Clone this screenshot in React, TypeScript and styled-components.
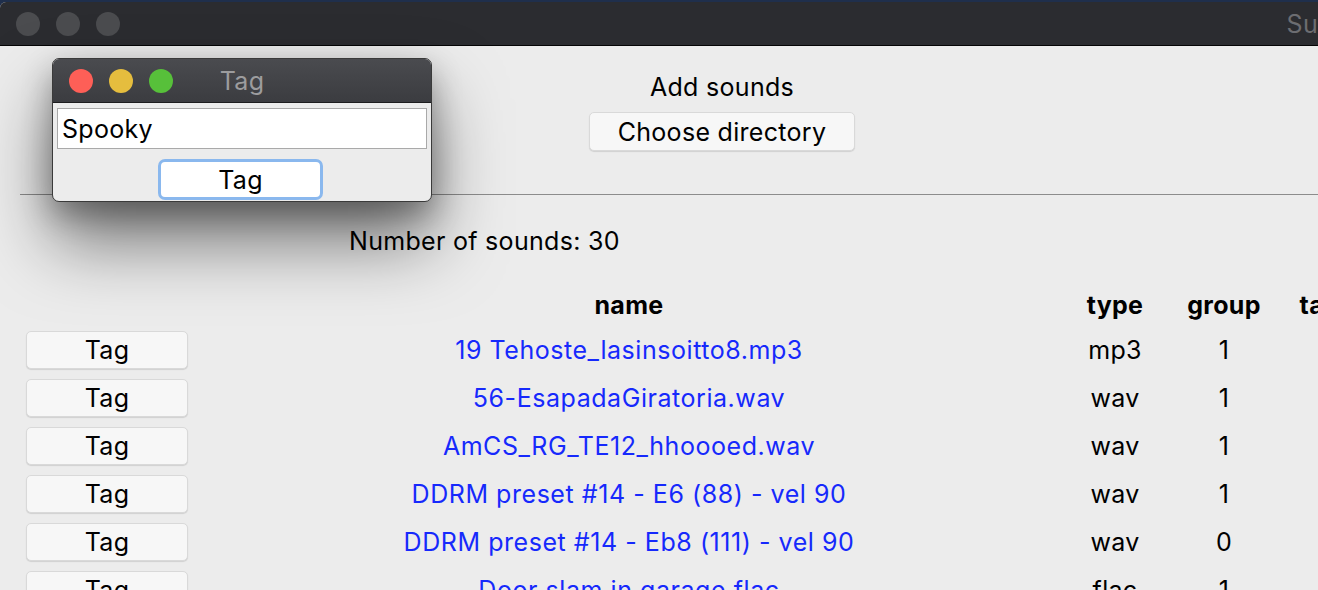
import React from "react";
import styled, { createGlobalStyle } from "styled-components";

const GlobalStyle = createGlobalStyle`
  html, body { margin: 0; padding: 0; height: 100%; overflow: hidden; }
  body {
    background: #1f2f4c;
    font-family: Inter, "Noto Sans", sans-serif;
    letter-spacing: 0.3px;
    -webkit-font-smoothing: antialiased;
  }
`;

const Window = styled.div`
  margin-top: 2px;
  height: 588px;
  display: flex;
  flex-direction: column;
  border-top-left-radius: 6px;
  overflow: hidden;
  position: relative;
  background: #ececec;
`;

const TitleBar = styled.div<{ $popup?: boolean }>`
  flex: none;
  height: 43px;
  display: flex;
  align-items: center;
  padding-left: 16px;
  gap: 16px;
  background: ${(p) => (p.$popup ? "linear-gradient(#4a4b4f, #3b3c40)" : "#2b2c30")};
  border-bottom: 1px solid ${(p) => (p.$popup ? "#1c1c1e" : "#050506")};
  position: relative;
`;

const Light = styled.span<{ $color: string }>`
  width: 24px;
  height: 24px;
  border-radius: 50%;
  background: ${(p) => p.$color};
  flex: none;
`;

const MainTitle = styled.div`
  margin-left: auto;
  white-space: nowrap;
  color: #6c6d71;
  font-size: 25px;
  line-height: 28px;
`;

const PopupTitle = styled.div`
  position: absolute;
  left: 0;
  right: 0;
  text-align: center;
  color: #9c9c9e;
  font-size: 25px;
  line-height: 28px;
  pointer-events: none;
`;

const Content = styled.div`
  flex: 1;
  display: flex;
  flex-direction: column;
  background: #ececec;
`;

const AddSection = styled.div`
  display: flex;
  flex-direction: column;
  align-items: center;
  padding-top: 26px;
  padding-left: 126px;
`;

const Label = styled.div`
  font-size: 25px;
  line-height: 30px;
  color: #000;
`;

const PushButton = styled.button<{ $w: number; $h: number }>`
  width: ${(p) => p.$w}px;
  height: ${(p) => p.$h}px;
  background: #f7f7f7;
  border: 1px solid #d9d9d9;
  border-radius: 5px;
  box-shadow: 0 1px 1px rgba(0, 0, 0, 0.12);
  font-family: inherit;
  letter-spacing: inherit;
  font-size: 25px;
  color: #000;
  padding: 0;
  display: flex;
  align-items: center;
  justify-content: center;
`;

const ChooseButton = styled(PushButton)`
  margin-top: 10px;
`;

const Separator = styled.div`
  margin: 43px 0 0 20px;
  height: 1px;
  background: #8c8c8c;
`;

const Count = styled(Label)`
  margin-top: 31px;
  padding-left: 349px;
`;

const Table = styled.div`
  margin-top: 28px;
  display: grid;
  grid-template-columns: 26px 162px 882px 90px 128px 78px;
  grid-auto-rows: 48px;
  grid-template-rows: 42px;
  align-items: center;
`;

const Cell = styled.div<{ $col: number; $head?: boolean; $link?: boolean }>`
  grid-column: ${(p) => p.$col};
  text-align: center;
  font-size: 25px;
  line-height: 30px;
  font-weight: ${(p) => (p.$head ? 700 : 400)};
  color: ${(p) => (p.$link ? "#1629fc" : "#000")};
  letter-spacing: ${(p) => (p.$link ? "0.55px" : "inherit")};
  white-space: nowrap;
`;

const Popup = styled.div`
  position: absolute;
  left: 52px;
  top: 56px;
  width: 380px;
  height: 144px;
  box-sizing: border-box;
  border: 1px solid #3a3a3a;
  border-radius: 7px;
  overflow: hidden;
  background: #ececec;
  display: flex;
  flex-direction: column;
  box-shadow: 0 40px 70px rgba(0, 0, 0, 0.5), 0 12px 30px rgba(0, 0, 0, 0.3);
`;

const PopupBody = styled.div`
  display: flex;
  flex-direction: column;
  align-items: center;
  padding: 5px 4px 0 4px;
`;

const Input = styled.div`
  align-self: stretch;
  height: 41px;
  box-sizing: border-box;
  background: #fff;
  border: 1px solid #a9a9a9;
  padding-left: 4px;
  display: flex;
  align-items: center;
  font-size: 25px;
  color: #000;
`;

const FocusButton = styled.button`
  margin: 10px 3px 0 0;
  width: 165px;
  height: 41px;
  box-sizing: border-box;
  background: #fff;
  border: 3px solid #8ab8ee;
  border-radius: 7px;
  font-family: inherit;
  letter-spacing: inherit;
  font-size: 25px;
  color: #000;
  padding: 0;
`;

const rows = [
  { name: "19 Tehoste_lasinsoitto8.mp3", type: "mp3", group: "1" },
  { name: "56-EsapadaGiratoria.wav", type: "wav", group: "1" },
  { name: "AmCS_RG_TE12_hhoooed.wav", type: "wav", group: "1" },
  { name: "DDRM preset #14 - E6 (88) - vel 90", type: "wav", group: "1" },
  { name: "DDRM preset #14 - Eb8 (111) - vel 90", type: "wav", group: "0" },
  { name: "Door slam in garage.flac", type: "flac", group: "1" },
];

export default function App() {
  return (
    <>
      <GlobalStyle />
      <Window>
        <TitleBar>
          <Light $color="#4b4c4f" />
          <Light $color="#4b4c4f" />
          <Light $color="#4b4c4f" />
          <MainTitle>Su</MainTitle>
        </TitleBar>
        <Content>
          <AddSection>
            <Label>Add sounds</Label>
            <ChooseButton $w={266} $h={39}>Choose directory</ChooseButton>
          </AddSection>
          <Separator />
          <Count>Number of sounds: 30</Count>
          <Table>
            <Cell $col={3} $head>name</Cell>
            <Cell $col={4} $head>type</Cell>
            <Cell $col={5} $head>group</Cell>
            <Cell $col={6} $head>tags</Cell>
            {rows.map((r) => (
              <React.Fragment key={r.name}>
                <Cell $col={2}>
                  <PushButton $w={162} $h={38}>Tag</PushButton>
                </Cell>
                <Cell $col={3} $link>{r.name}</Cell>
                <Cell $col={4}>{r.type}</Cell>
                <Cell $col={5}>{r.group}</Cell>
              </React.Fragment>
            ))}
          </Table>
        </Content>
        <Popup>
          <TitleBar $popup>
            <Light $color="#fe5f57" />
            <Light $color="#e5bd3e" />
            <Light $color="#57c03a" />
            <PopupTitle>Tag</PopupTitle>
          </TitleBar>
          <PopupBody>
            <Input>Spooky</Input>
            <FocusButton>Tag</FocusButton>
          </PopupBody>
        </Popup>
      </Window>
    </>
  );
}
